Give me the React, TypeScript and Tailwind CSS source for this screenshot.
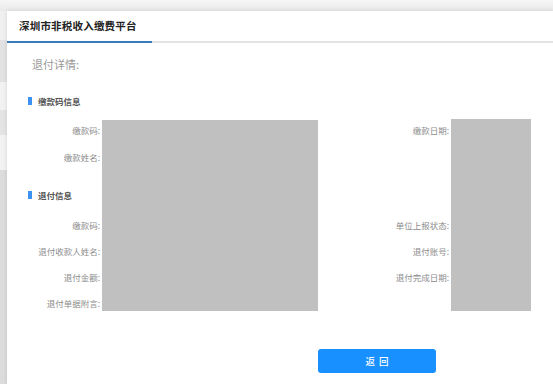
const font = "font-['PingFang_SC','Noto_Sans_CJK_SC',sans-serif]"

const leftRows1 = ["缴款码:", "缴款姓名:"]
const rightRows1 = ["缴款日期:", ""]
const leftRows2 = ["缴款码:", "退付收款人姓名:", "退付金额:", "退付单据附言:"]
const rightRows2 = ["单位上报状态:", "退付账号:", "退付完成日期:", ""]

function Row({ left, right, h }: { left: string; right: string; h: string }) {
  return (
    <div className={`flex items-center ${h} text-[8.5px] text-[#8c8c8c]`}>
      <div className="w-[93px] text-right">{left}</div>
      <div className="w-[218px]" />
      <div className="w-[131px] text-right">{right}</div>
    </div>
  )
}

function SectionTitle({ text, className }: { text: string; className: string }) {
  return (
    <div className={`flex items-center h-[24px] pl-[21px] gap-[6px] ${className}`}>
      <span className="w-[4px] h-[8px] bg-[#3d92f0]" />
      <span className="text-[8.5px] font-bold text-[#555]">{text}</span>
    </div>
  )
}

export default function App() {
  return (
    <div className={`w-[553px] h-[384px] overflow-hidden bg-[#ececec] flex flex-col ${font}`}>
      <div className="h-[11px] shrink-0 bg-gradient-to-b from-[#f6f6f6] to-[#e9e9e9]" />
      <div className="flex flex-1">
        {/* backdrop strip */}
        <div className="w-[7px] flex flex-col">
          <div className="h-[29px] bg-[#f0f0f0]" />
          <div className="h-[42px] bg-[#e2e2e2]" />
          <div className="h-[28px] bg-[#f2f2f2]" />
          <div className="h-[25px] bg-[#e4e4e4]" />
          <div className="h-[35px] bg-[#f2f2f2]" />
          <div className="flex-1 bg-[#dcdcdc]" />
        </div>

        <div className="relative flex-1 bg-white shadow-[0_0_4px_rgba(0,0,0,0.12)]">
          {/* header */}
          <div className="h-[32px] border-b-2 border-[#e4e4e4] flex">
            <div className="w-[145px] -mb-[2px] border-b-2 border-[#3a7bbd] flex items-center pl-[12px]">
              <span className="text-[10.5px] font-bold text-[#222] tracking-[0.2px]">深圳市非税收入缴费平台</span>
            </div>
          </div>

          <div className="mt-[9px] h-[24px] flex items-center pl-[25px] text-[11px] text-[#999]">退付详情:</div>

          <SectionTitle text="缴款码信息" className="mt-[13px]" />
          <div className="mt-[4px]">
            {leftRows1.map((l, i) => (
              <Row key={i} left={l} right={rightRows1[i]} h="h-[27px]" />
            ))}
          </div>

          <SectionTitle text="退付信息" className="mt-[12px]" />
          <div className="mt-[5px]">
            {leftRows2.map((l, i) => (
              <Row key={i} left={l} right={rightRows2[i]} h="h-[26px]" />
            ))}
          </div>

          <div className="mt-[30px] pl-[311px]">
            <button className="w-[118px] h-[24px] pl-[4px] rounded-[3px] bg-[#1890ff] text-white text-[9.5px] font-medium tracking-[4px]">
              返回
            </button>
          </div>

          {/* redacted values */}
          <div className="absolute left-[95px] top-[109px] w-[216px] h-[191px] bg-[#c0c0c0]" />
          <div className="absolute left-[444px] top-[108px] w-[80px] h-[192px] bg-[#c0c0c0]" />
        </div>
      </div>
    </div>
  )
}
